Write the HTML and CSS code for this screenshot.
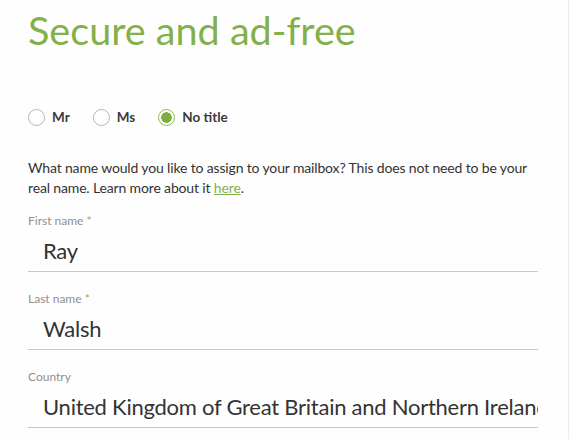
FILE: index.html
```html
<!DOCTYPE html>
<html lang="en">
<head>
<meta charset="utf-8">
<title>Secure and ad-free</title>
<link rel="stylesheet" href="styles.css">
</head>
<body>
<div class="page">
  <h1 class="title">Secure and ad-free</h1>
  <div class="radios">
    <label class="radio"><span class="circle"></span><span class="rlabel">Mr</span></label>
    <label class="radio"><span class="circle"></span><span class="rlabel">Ms</span></label>
    <label class="radio"><span class="circle checked"></span><span class="rlabel">No title</span></label>
  </div>
  <p class="intro">What name would you like to assign to your mailbox? This does not need to be your real name. Learn more about it <a href="#">here</a>.</p>
  <div class="field">
    <div class="flabel">First name <span class="req">*</span></div>
    <div class="fvalue">Ray</div>
  </div>
  <div class="field">
    <div class="flabel">Last name <span class="req">*</span></div>
    <div class="fvalue">Walsh</div>
  </div>
  <div class="field">
    <div class="flabel">Country</div>
    <div class="fvalue">United Kingdom of Great Britain and Northern Ireland</div>
  </div>
</div>
<div class="edge"></div>
</body>
</html>
```
FILE: styles.css
```css
html, body {
  margin: 0;
  padding: 0;
  background: #fefefe;
  overflow: hidden;
}
body {
  font-family: Lato, "Open Sans", sans-serif;
  color: #333;
}
.page {
  padding: 0 31px 0 28px;
  width: 510px;
}
.title {
  margin: 0;
  padding-top: 6px;
  font-size: 39.6px;
  font-weight: 400;
  line-height: 48px;
  color: #84b04a;
}
.radios {
  display: flex;
  align-items: center;
  margin-top: 53px;
  height: 20px;
}
.radio {
  display: flex;
  align-items: center;
  margin-right: 23px;
}
.circle {
  box-sizing: border-box;
  width: 17px;
  height: 17px;
  border: 1px solid #b5b5b5;
  border-radius: 50%;
  margin-right: 7px;
  background: #fff;
}
.circle.checked {
  border-color: #8cba4f;
  background: radial-gradient(circle, #7fae3e 0 5px, #fff 5.5px);
}
.rlabel {
  font-size: 13.5px;
  font-weight: 700;
  color: #3a3a3a;
}
.intro {
  margin: 31px 0 0;
  font-size: 14px;
  letter-spacing: -0.15px;
  line-height: 20px;
  color: #333;
}
.intro a {
  color: #84b04a;
}
.field {
  margin-top: 16px;
  border-bottom: 1px solid #c8c8c8;
}
.field + .field {
  margin-top: 20px;
}
.flabel {
  font-size: 12px;
  line-height: 14px;
  color: #8f8f8f;
}
.req {
  color: #8fb35b;
}
.fvalue {
  padding: 10px 0 7px 15px;
  font-size: 22px;
  letter-spacing: -0.25px;
  line-height: 26px;
  color: #333;
  white-space: nowrap;
  overflow: hidden;
}
.edge {
  position: absolute;
  top: 0;
  right: 0;
  width: 1px;
  height: 439px;
  background: #ececec;
}
```
